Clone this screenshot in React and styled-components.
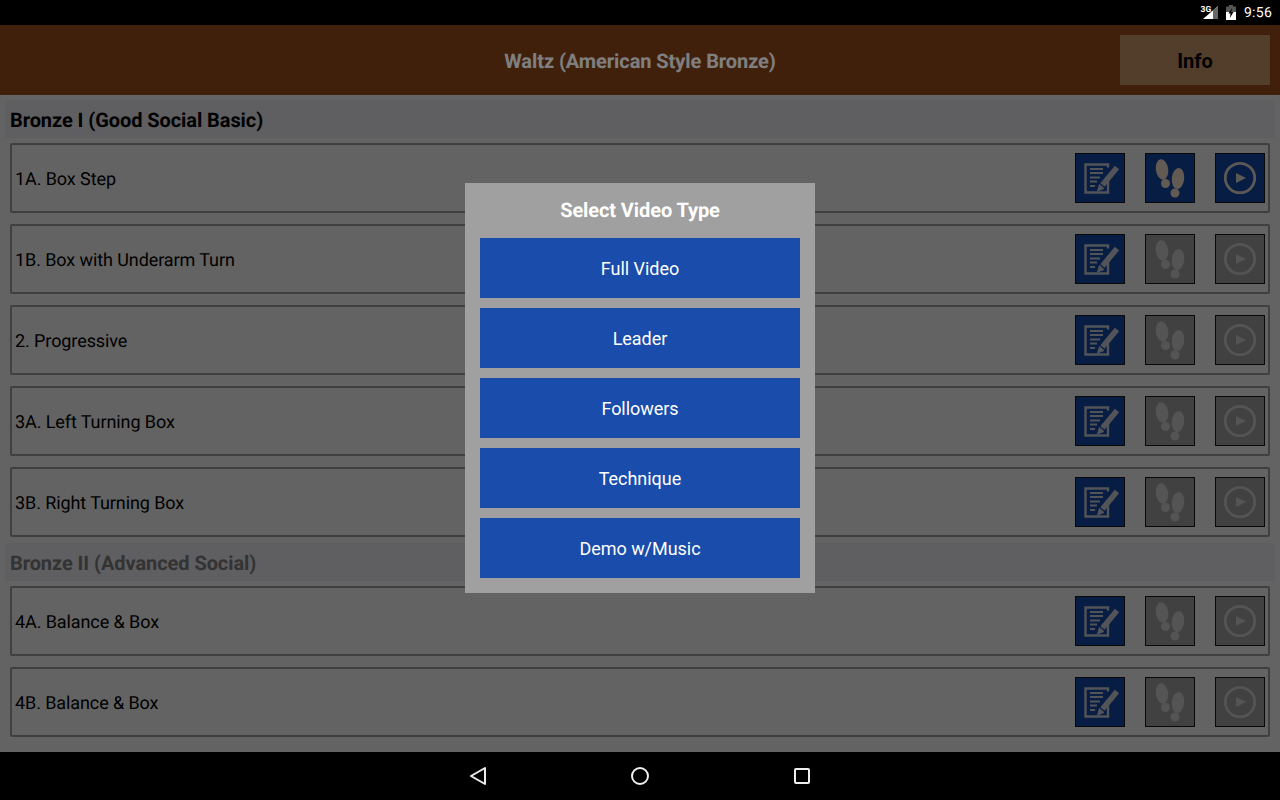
import React from "react";
import styled, { createGlobalStyle } from "styled-components";

const Global = createGlobalStyle`
  html, body { margin: 0; padding: 0; background: #000; }
  * { box-sizing: border-box; }
  body { font-family: Roboto, "Liberation Sans", sans-serif; text-rendering: geometricPrecision; }
`;
const Screen = styled.div`
  width: 1280px; height: 800px; display: flex; flex-direction: column; overflow: hidden; background: #000;
`;
const StatusBar = styled.div`
  height: 25px; flex: none; background: #000; color: #fff; display: flex; align-items: center;
  justify-content: flex-end; padding-right: 8px; font-size: 14px; font-weight: 400;
`;
const SignalIcon = styled.svg` display: block; `;
const BatteryIcon = styled.svg` display: block; margin-left: 8px; `;
const StatusClock = styled.span` margin-left: 8px; letter-spacing: 0.25px; `;
const Main = styled.div` position: relative; height: 727px; flex: none; background: #c6c6c6; overflow: hidden; `;
const Header = styled.header`
  height: 70px; background: #804014; display: flex; align-items: center; justify-content: center; position: relative;
`;
const Title = styled.h1` margin: 2px 0 0; font-size: 20px; font-weight: 700; color: #fff; letter-spacing: -0.07px; `;
const InfoButton = styled.button`
  position: absolute; right: 10px; top: 10px; width: 150px; height: 50px; border: 0; background: #a67a56;
  font: 700 20px Roboto, sans-serif; color: #000; padding: 2px 0 0;
`;
const List = styled.div` padding: 5px 5px 0; display: flex; flex-direction: column; `;
const SectionBar = styled.div`
  height: 38px; background: #bebec2; display: flex; align-items: center; padding: 2px 0 0 5px;
  font-size: 20px; font-weight: 700; letter-spacing: -0.07px; color: ${(p) => (p.$muted ? "#666" : "#000")};
  margin-bottom: 5px;
`;
const Row = styled.div`
  height: 70px; margin: 0 5px 11px; border: 2px solid #808080; border-radius: 2px; display: flex; align-items: center;
  padding: 0 3px; font-size: 18px; color: #000;
  &:last-child { margin-bottom: 0; }
`;
const RowsGroup = styled.div` display: flex; flex-direction: column; margin-bottom: 6px; `;
const RowLabel = styled.span` flex: 1; padding-top: 2px; letter-spacing: -0.09px; `;
const Actions = styled.div` display: flex; gap: 20px; `;
const IconBox = styled.div`
  width: 50px; height: 50px; border: 1px solid #111; background: ${(p) => (p.$on ? "#103a88" : "#828282")};
  color: ${(p) => (p.$on ? p.$tint : "#a8a8a8")};
  svg { display: block; filter: blur(0.4px); }
`;
const Overlay = styled.div`
  position: absolute; inset: 0; background: rgba(0,0,0,.5); display: flex; justify-content: center; align-items: flex-start; padding-top: 158px;
`;
const Dialog = styled.div`
  width: 350px; height: 410px; background: #a0a0a0; padding: 0 15px; display: flex; flex-direction: column;
`;
const DialogTitle = styled.div`
  height: 55px; padding-bottom: 2px; display: flex; align-items: center; justify-content: center; color: #fff; font-size: 20px; font-weight: 700; letter-spacing: -0.1px;
`;
const DialogButtons = styled.div` display: flex; flex-direction: column; gap: 10px; `;
const VideoButton = styled.button`
  height: 60px; border: 0; background: #1a4cab; color: #fff; font: 400 18px Roboto, sans-serif; padding: 0; letter-spacing: -0.04px;
`;
const NavBar = styled.nav`
  height: 48px; flex: none; background: #000; display: flex; align-items: center; justify-content: center; gap: 138px;
`;

const NotesIcon = () => (
  <svg width="48" height="48" viewBox="0 0 48 48" fill="none" stroke="currentColor">
    <path d="M32 21v17.5H9.5V10.5H32v3" strokeWidth="2.4" />
    <path d="M14 15h13M14 19h13M14 23.5h10M14 27.5h7M14 32h5" strokeWidth="2.2" />
    <path d="M41 13.5 26.5 31" strokeWidth="5.6" />
    <path d="M23.5 30.5 21.5 37 28 34.5z" fill="currentColor" strokeWidth="1" />
  </svg>
);
const StepsIcon = () => (
  <svg width="48" height="48" viewBox="0 0 48 48" fill="currentColor">
    <ellipse cx="16" cy="15.5" rx="6.2" ry="10.3" transform="rotate(-8 16 15.5)" />
    <circle cx="19.5" cy="29.5" r="4.5" />
    <ellipse cx="32" cy="24.5" rx="6.2" ry="10.6" transform="rotate(6 32 24.5)" />
    <circle cx="29" cy="39" r="4.5" />
  </svg>
);
const PlayIcon = () => (
  <svg width="48" height="48" viewBox="0 0 48 48" fill="none" stroke="currentColor">
    <circle cx="24" cy="24" r="14.7" strokeWidth="2.8" />
    <path d="M20 19v10l10-5z" fill="currentColor" stroke="none" />
  </svg>
);

const ItemRow = ({ label, active }) => (
  <Row>
    <RowLabel>{label}</RowLabel>
    <Actions>
      <IconBox $on $tint="#a4a8b0"><NotesIcon /></IconBox>
      <IconBox $on={active} $tint="#c4b6a8"><StepsIcon /></IconBox>
      <IconBox $on={active} $tint="#b8b2aa"><PlayIcon /></IconBox>
    </Actions>
  </Row>
);

const bronze1 = [["1A. Box Step", true], ["1B. Box with Underarm Turn"], ["2. Progressive"], ["3A. Left Turning Box"], ["3B. Right Turning Box"]];
const bronze2 = [["4A. Balance & Box"], ["4B. Balance & Box"]];
const videos = ["Full Video", "Leader", "Followers", "Technique", "Demo w/Music"];

export default function App() {
  return (
    <Screen>
      <Global />
      <StatusBar>
        <SignalIcon width="18" height="16" viewBox="0 0 18 16">
          <path d="M3 14 18 1v13z" fill="#fff" />
          <path d="M13 5.3 18 1v13h-5z" fill="#666" />
          <text x="0.5" y="7" fontSize="8.5" fontWeight="700" fill="#fff" fontFamily="Roboto, sans-serif">3G</text>
        </SignalIcon>
        <BatteryIcon width="10" height="15" viewBox="0 0 10 15">
          <path d="M0 1.5h3V0h4v1.5h3V15H0z" fill="#555" />
          <path d="M0 7h10v8H0z" fill="#fff" />
          <path d="M5.8 3 2.5 8.5h2l-.6 4.5 3.6-6H5.3z" fill="#000" />
        </BatteryIcon>
        <StatusClock>9:56</StatusClock>
      </StatusBar>
      <Main>
        <Header>
          <Title>Waltz (American Style Bronze)</Title>
          <InfoButton>Info</InfoButton>
        </Header>
        <List>
          <SectionBar>Bronze I (Good Social Basic)</SectionBar>
          <RowsGroup>
            {bronze1.map(([l, a]) => <ItemRow key={l} label={l} active={a} />)}
          </RowsGroup>
          <SectionBar $muted>Bronze II (Advanced Social)</SectionBar>
          <RowsGroup>
            {bronze2.map(([l, a]) => <ItemRow key={l} label={l} active={a} />)}
          </RowsGroup>
        </List>
        <Overlay>
          <Dialog>
            <DialogTitle>Select Video Type</DialogTitle>
            <DialogButtons>
              {videos.map((v) => <VideoButton key={v}>{v}</VideoButton>)}
            </DialogButtons>
          </Dialog>
        </Overlay>
      </Main>
      <NavBar>
        <svg width="24" height="24" viewBox="0 0 24 24" fill="none" stroke="#eee" strokeWidth="2" strokeLinejoin="round">
          <path d="M19 4v16L5 12z" />
        </svg>
        <svg width="24" height="24" viewBox="0 0 24 24" fill="none" stroke="#eee" strokeWidth="2">
          <circle cx="12" cy="12" r="8" />
        </svg>
        <svg width="24" height="24" viewBox="0 0 24 24" fill="none" stroke="#eee" strokeWidth="2" strokeLinejoin="round">
          <rect x="5" y="5" width="14" height="14" rx="1" />
        </svg>
      </NavBar>
    </Screen>
  );
}
